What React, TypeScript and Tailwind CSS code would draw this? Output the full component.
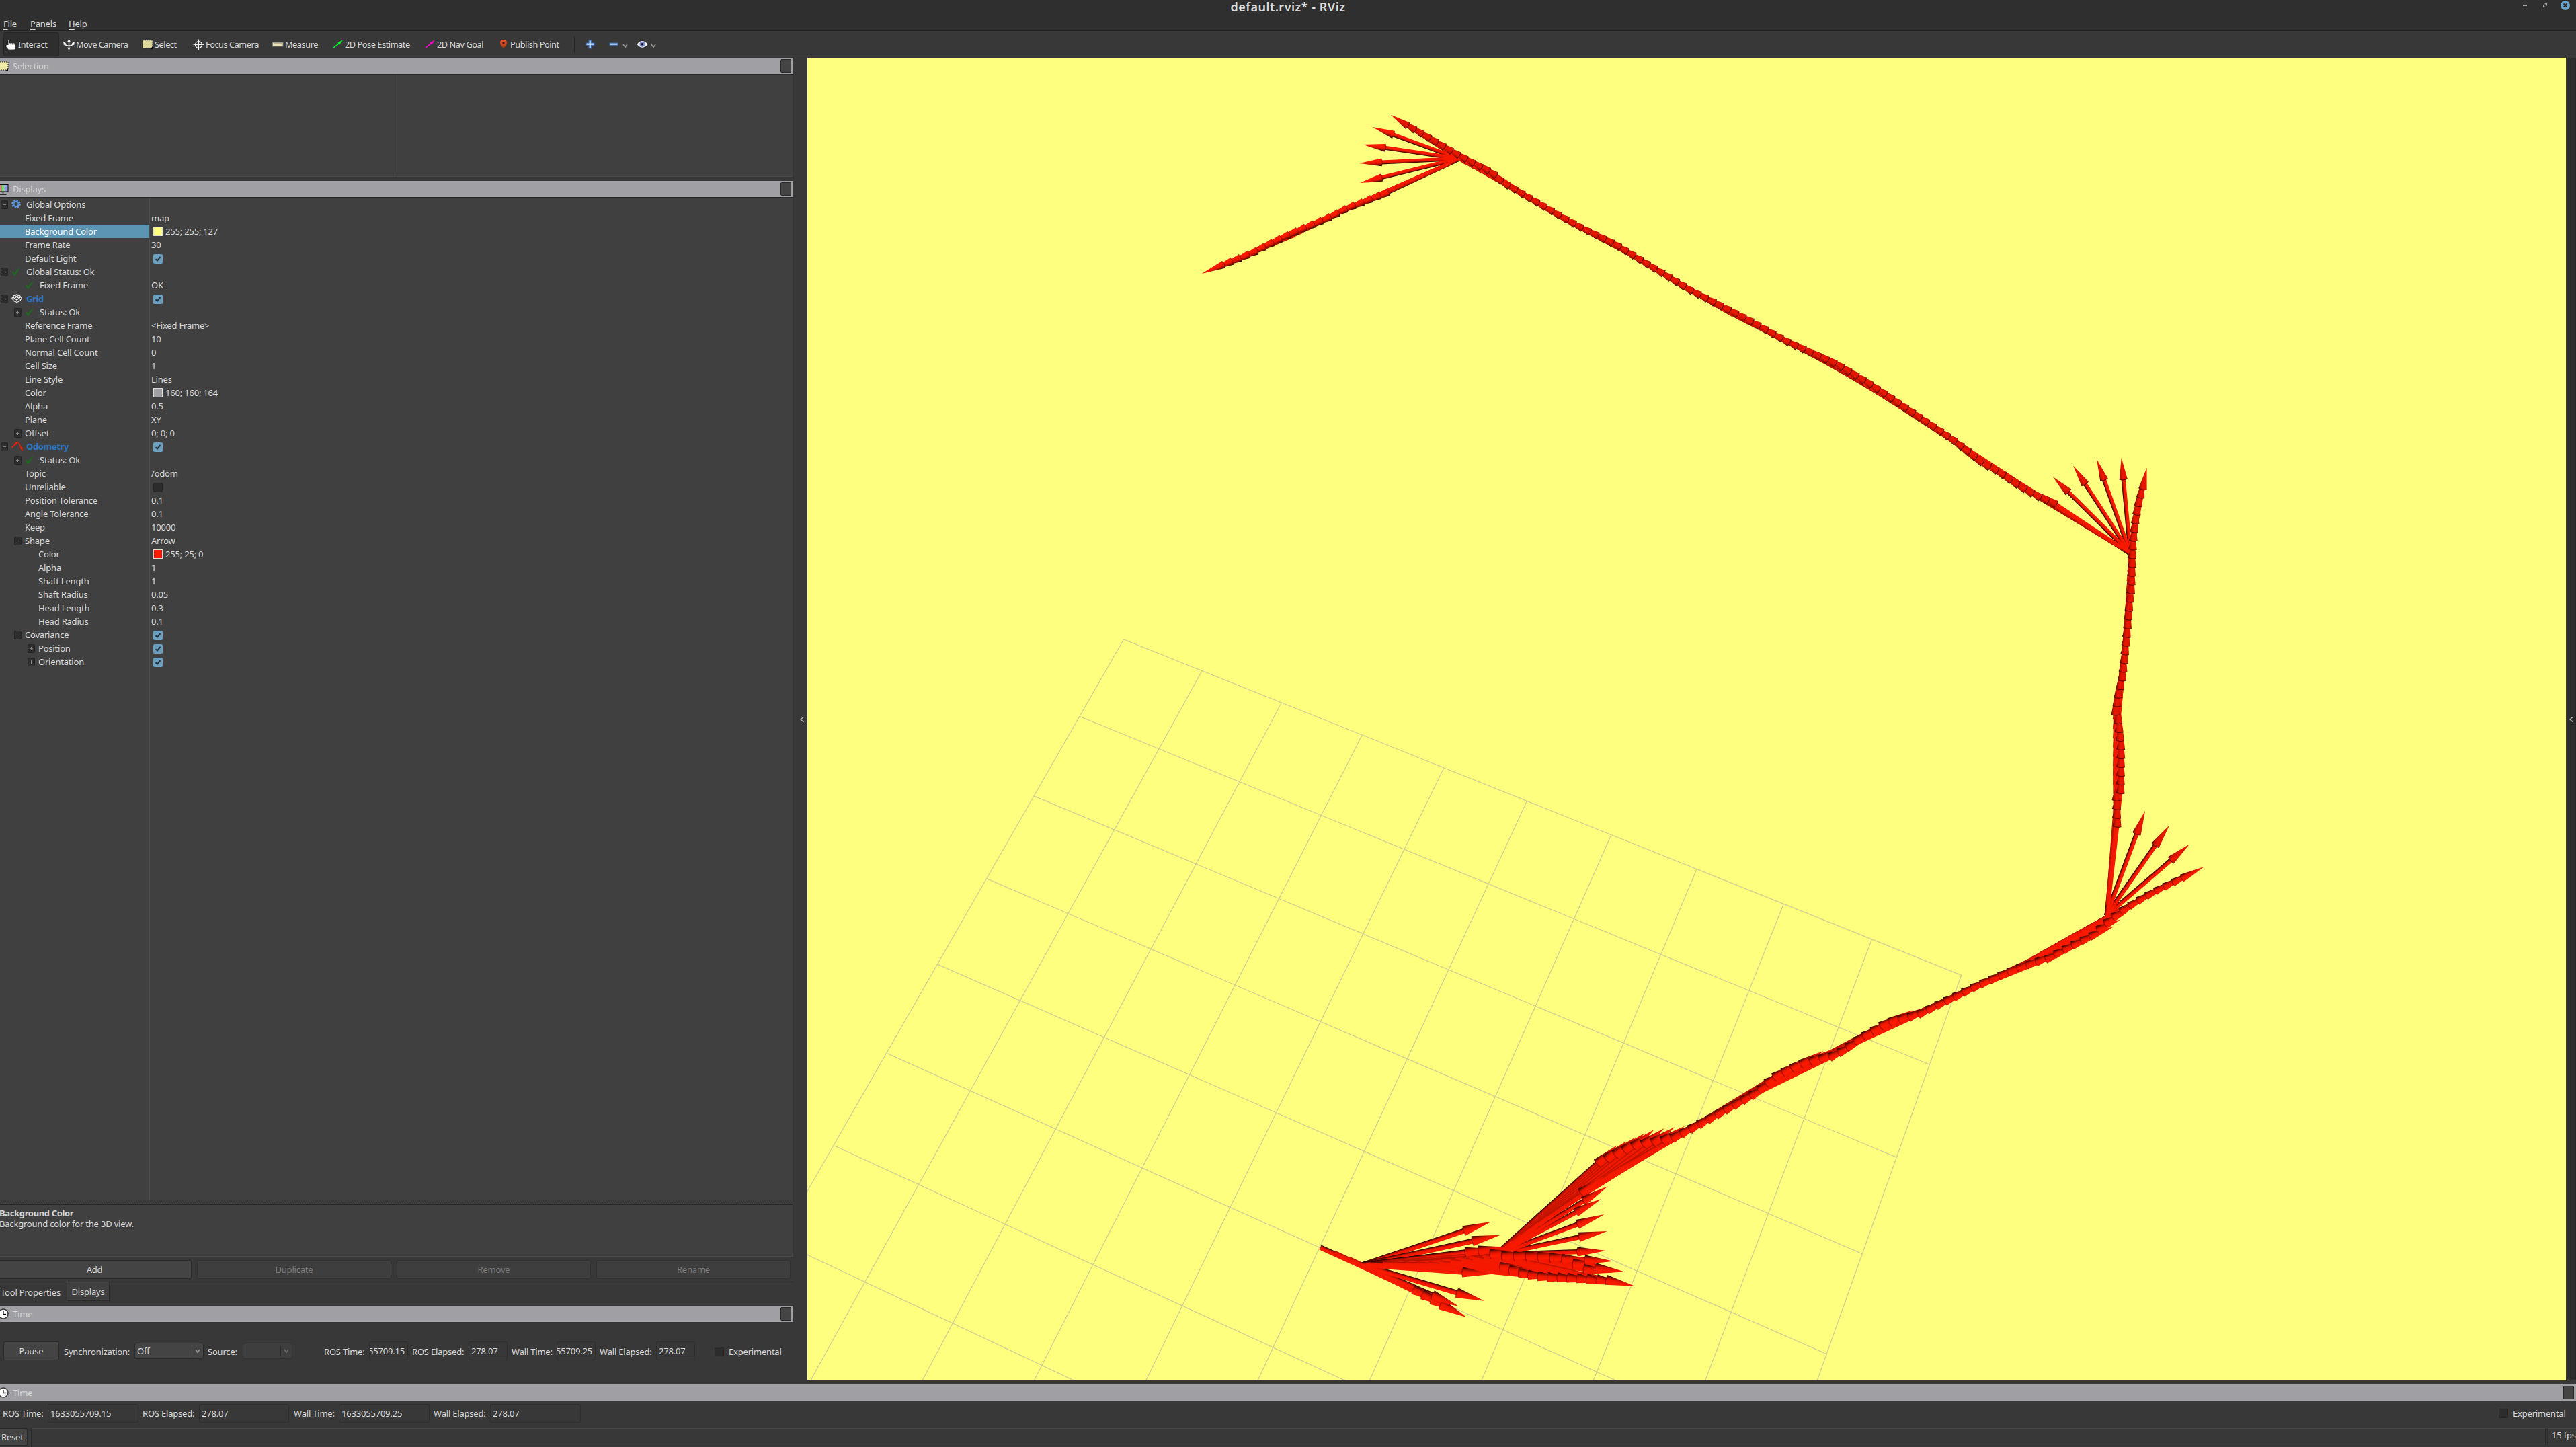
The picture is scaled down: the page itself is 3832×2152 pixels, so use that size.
import React from "react";

type Pt = [number, number];

/* ---------- 3D view: ground grid ---------- */

// Known grid nodes: [column, row, x, y]
const NODES: [number, number, number, number][] = [
  [0, 0, 1671, 950.5],
  [10, 0, 2917.3, 1450],
  [9, 0, 2784.7, 1397],
  [10, 1, 2870.4, 1583.3],
  [8, 1, 2602, 1473.3],
  [7, 1, 2470.4, 1419],
  [9, 2, 2684.2, 1663.7],
  [7, 2, 2415.3, 1551.3],
  [7, 3, 2357.6, 1688.3],
  [8, 3, 2492.4, 1746],
  [5, 4, 2029, 1712.7],
  [6, 4, 2162.5, 1771],
  [8, 4, 2435.7, 1890],
  [9, 4, 2575, 1952],
  [7, 5, 2235.3, 1977.7],
  [5, 5, 1963.8, 1853.3],
  [0, 3, 1469, 1307.5],
  [0, 6, 1239, 1703.5],
];

function solve(a: number[][], b: number[]): number[] {
  const n = b.length;
  for (let i = 0; i < n; i++) {
    let p = i;
    for (let r = i + 1; r < n; r++) if (Math.abs(a[r][i]) > Math.abs(a[p][i])) p = r;
    [a[i], a[p]] = [a[p], a[i]];
    [b[i], b[p]] = [b[p], b[i]];
    for (let r = i + 1; r < n; r++) {
      const f = a[r][i] / a[i][i];
      for (let c = i; c < n; c++) a[r][c] -= f * a[i][c];
      b[r] -= f * b[i];
    }
  }
  const x = new Array(n).fill(0);
  for (let i = n - 1; i >= 0; i--) {
    let s = b[i];
    for (let c = i + 1; c < n; c++) s -= a[i][c] * x[c];
    x[i] = s / a[i][i];
  }
  return x;
}

function fitPlane() {
  const ata = Array.from({ length: 8 }, () => new Array(8).fill(0));
  const atb = new Array(8).fill(0);
  for (const [u, v, X, Y] of NODES) {
    const x = X / 1000;
    const y = Y / 1000;
    const rows: [number[], number][] = [
      [[u, v, 1, 0, 0, 0, -u * x, -v * x], x],
      [[0, 0, 0, u, v, 1, -u * y, -v * y], y],
    ];
    for (const [r, t] of rows)
      for (let i = 0; i < 8; i++) {
        atb[i] += r[i] * t;
        for (let j = 0; j < 8; j++) ata[i][j] += r[i] * r[j];
      }
  }
  const h = solve(ata, atb);
  return (u: number, v: number): Pt => {
    const w = h[6] * u + h[7] * v + 1;
    return [((h[0] * u + h[1] * v + h[2]) / w) * 1000, ((h[3] * u + h[4] * v + h[5]) / w) * 1000];
  };
}
const project = fitPlane();

function GridLines() {
  const lines: React.ReactNode[] = [];
  for (let i = 0; i <= 10; i++) {
    const [a, b] = [project(i, 0), project(i, 10)];
    const [c, d] = [project(0, i), project(10, i)];
    lines.push(<line key={"c" + i} x1={a[0]} y1={a[1]} x2={b[0]} y2={b[1]} />);
    lines.push(<line key={"r" + i} x1={c[0]} y1={c[1]} x2={d[0]} y2={d[1]} />);
  }
  return (
    <g stroke="#cfcf92" strokeWidth="1.3">
      {lines}
    </g>
  );
}

/* ---------- 3D view: odometry arrows ---------- */

type Arrow = { tail: Pt; base: Pt; head: number; r: number; dim: boolean; shaft: "lit" | "packed" };

function sample(line: Pt[], n: number): Pt[] {
  const acc = [0];
  for (let i = 1; i < line.length; i++)
    acc.push(acc[i - 1] + Math.hypot(line[i][0] - line[i - 1][0], line[i][1] - line[i - 1][1]));
  const total = acc[acc.length - 1];
  return Array.from({ length: n }, (_, k) => {
    const s = (total * k) / (n - 1);
    let i = 1;
    while (i < line.length - 1 && acc[i] < s) i++;
    const t = (s - acc[i - 1]) / (acc[i] - acc[i - 1]);
    return [
      line[i - 1][0] + t * (line[i][0] - line[i - 1][0]),
      line[i - 1][1] + t * (line[i][1] - line[i - 1][1]),
    ] as Pt;
  });
}

function chain(tails: Pt[], bases: Pt[], n: number, head: Pt, r: Pt, dim = false): Arrow[] {
  const t = sample(tails, n);
  const b = sample(bases, n);
  return t.map((tail, i) => {
    const f = i / (n - 1);
    return {
      tail,
      base: b[i],
      head: head[0] + f * (head[1] - head[0]),
      r: r[0] + f * (r[1] - r[0]),
      dim,
      shaft: i === 0 ? "lit" : "packed",
    };
  });
}

function fan(tail: Pt, tips: Pt[], head: number, r: number, dim = false): Arrow[] {
  return tips.map(([x, y]) => {
    const d = Math.hypot(x - tail[0], y - tail[1]);
    const f = 1 - head / d;
    return { tail, base: [tail[0] + f * (x - tail[0]), tail[1] + f * (y - tail[1])], head, r, dim, shaft: "lit" };
  });
}

const ARROWS: Arrow[] = [
  ...chain([[1964, 1855], [2027, 1881]], [[2103, 1918], [2144, 1940]], 4, [42, 42], [7.5, 8]),
  ...fan([2027, 1881], [[2170, 1943], [2208, 1934.7], [2218, 1895], [2218, 1817], [2231.7, 1836.7], [2222, 1857]], 42, 7.5),
  ...chain(
    [[2027, 1881], [2120, 1878], [2225, 1866]],
    [[2200, 1860], [2226, 1868], [2290, 1869], [2328, 1873], [2358, 1888], [2374, 1886]],
    11, [44, 44], [7.5, 7.5],
  ),
  ...chain(
    [[2040, 1880], [2130, 1880], [2225, 1867]],
    [[2232, 1884], [2262, 1894], [2295, 1899], [2350, 1901], [2390, 1903.5]],
    12, [43, 43], [7, 7.5],
  ),
  ...fan([2225, 1866], [[2400, 1875.7], [2389, 1860], [2391, 1831], [2386.6, 1806], [2382, 1783], [2392, 1764], [2386, 1749]], 42, 7),
  ...chain(
    [[2225, 1866], [2390, 1750], [2480, 1699], [2620, 1618], [2716, 1572], [2765, 1546], [2850, 1508], [3010, 1433], [3132, 1365]],
    [
      [2376, 1730], [2399, 1719], [2426, 1706], [2455, 1700], [2484, 1695], [2502, 1686], [2530, 1671], [2568, 1650],
      [2610, 1627], [2634, 1605], [2649, 1597], [2678, 1583], [2706, 1576], [2724, 1572], [2742, 1562], [2762, 1547],
      [2788, 1532], [2804, 1522], [2820, 1518], [2849, 1511], [2890, 1491], [2941, 1466], [2987, 1446], [3022, 1433],
      [3043, 1427], [3073, 1411], [3109, 1393], [3135, 1370], [3158, 1353], [3183, 1338], [3207, 1325], [3246, 1306],
    ],
    67, [40, 37], [7.4, 6],
  ),
  ...fan([3133, 1362], [[3257, 1255.6], [3227, 1227.4], [3191, 1206]], 36, 6.5, true),
  ...chain(
    [[3134, 1360], [3147, 1230], [3146, 1070], [3157, 1000], [3165, 900], [3169, 823]],
    [
      [3149, 1229], [3148, 1186], [3154, 1180], [3155, 1117], [3151, 1076], [3147, 1063], [3151, 1037], [3157, 1010],
      [3160, 980], [3165, 930], [3167, 906], [3170, 879], [3172, 822], [3175, 785], [3180, 755], [3187.5, 727],
    ],
    40, [34, 32], [6.5, 6.2], true,
  ),
  ...fan([3169, 823], [[3155.7, 680.7], [3119, 683], [3084, 692.6], [3053.7, 709]], 32, 6, true),
  ...chain(
    [[3168, 823], [3058, 752], [2976, 702], [2860, 627], [2740, 549], [2575, 467], [2456, 395], [2333, 330], [2240, 275], [2171, 237]],
    [
      [3058, 750], [3030, 738], [3006, 724], [2977, 704], [2953, 691], [2908, 656], [2835, 607], [2786, 574], [2736, 544],
      [2664, 511], [2603, 477], [2517, 433], [2456, 396], [2407, 366], [2355, 340], [2333, 328], [2264, 288], [2237, 272],
      [2222, 258], [2199, 247], [2172, 232], [2134, 210], [2094, 187],
    ],
    90, [33, 30], [6.1, 5.6], true,
  ),
  ...fan([2170, 236], [[2041.5, 189], [2027.8, 215], [2022, 243], [2023, 272]], 33, 5.8),
  ...chain(
    [[2170, 237], [2008, 309], [1925, 350]],
    [[2065, 286], [2008, 308], [1985, 320], [1924, 346], [1897, 359], [1866, 375], [1820, 393.5]],
    21, [34, 35], [5.8, 5.8],
  ),
];

function Arrows() {
  const at = (a: Arrow) => {
    const deg = (Math.atan2(a.base[1] - a.tail[1], a.base[0] - a.tail[0]) * 180) / Math.PI;
    return `rotate(${deg.toFixed(2)})`;
  };
  return (
    <>
      <defs>
        <linearGradient id="lit" gradientUnits="userSpaceOnUse" x1="0" y1="-1" x2="0" y2="1">
          <stop offset="0" stopColor="#140100" />
          <stop offset="0.2" stopColor="#8a0e00" />
          <stop offset="0.4" stopColor="#e61700" />
          <stop offset="0.7" stopColor="#ff1a00" />
          <stop offset="1" stopColor="#f01800" />
        </linearGradient>
        <linearGradient id="packed" gradientUnits="userSpaceOnUse" x1="0" y1="-1" x2="0" y2="1">
          <stop offset="0" stopColor="#a81100" />
          <stop offset="0.3" stopColor="#f01800" />
          <stop offset="1" stopColor="#f81900" />
        </linearGradient>
        <linearGradient id="dim" gradientUnits="userSpaceOnUse" x1="0" y1="-1" x2="0" y2="1">
          <stop offset="0" stopColor="#3a0500" />
          <stop offset="0.18" stopColor="#b81200" />
          <stop offset="0.45" stopColor="#ea1700" />
          <stop offset="0.8" stopColor="#e01600" />
          <stop offset="1" stopColor="#b01100" />
        </linearGradient>
      </defs>
      {ARROWS.map((a, i) => {
        const len = Math.hypot(a.base[0] - a.tail[0], a.base[1] - a.tail[1]);
        return (
          <g key={i} transform={`translate(${a.tail[0].toFixed(1)} ${a.tail[1].toFixed(1)}) ${at(a)} scale(1 ${(a.r * 0.52).toFixed(2)})`}>
            <rect x="0" y="-1" width={len.toFixed(1)} height="2" fill={a.shaft === "lit" ? "url(#lit)" : "url(#packed)"} />
          </g>
        );
      })}
      {ARROWS.map((a, i) => (
        <g key={i} transform={`translate(${a.base[0].toFixed(1)} ${a.base[1].toFixed(1)}) ${at(a)} scale(1 ${a.r.toFixed(2)})`}>
          <path d={`M0 -1 L${a.head.toFixed(1)} 0 L0 1 Q-2.5 0 0 -1Z`} fill={a.dim ? "url(#dim)" : "url(#lit)"} />
          <path d="M0 -1 Q-2.5 0 0 1" fill="none" stroke="#3a0500" strokeWidth="1.1" vectorEffect="non-scaling-stroke" opacity={a.dim ? 0.8 : 0.45} />
        </g>
      ))}
    </>
  );
}

/* ---------- Small widgets ---------- */

function Check({ on }: { on: boolean }) {
  return (
    <span className={`flex h-[14px] w-[14px] shrink-0 items-center justify-center rounded-[2px] ${on ? "bg-[#6a9fc0]" : "border border-[#252525] bg-[#2c2c2c]"}`}>
      {on && (
        <svg width="10" height="10" viewBox="0 0 10 10">
          <path d="M1.5 5.2 L4 7.6 L8.5 2" fill="none" stroke="#25323a" strokeWidth="2" />
        </svg>
      )}
    </span>
  );
}

function Tick() {
  return (
    <svg width="15" height="16" viewBox="0 0 15 16">
      <path d="M1 8.5 L4.5 14.5 L13.5 1.2 C9.5 4 6.5 7.5 4.4 11 L3 8Z" fill="#167016" />
    </svg>
  );
}

function Clock() {
  return (
    <svg width="14" height="16" viewBox="0 0 14 16">
      <circle cx="5" cy="8" r="7" fill="#fff" stroke="#3a3a3a" strokeWidth="1.6" />
      <path d="M5 4 V8.5 H9" fill="none" stroke="#111" strokeWidth="1.3" />
    </svg>
  );
}

function SelectIcon({ x = 0 }: { x?: number }) {
  return (
    <svg width="17" height="15" viewBox={`${x} 0 17 15`}>
      <rect x="1" y="1" width="15" height="12" fill={x ? "#f0eaa8" : "#ddd79a"} />
      <rect x="1" y="1" width="15" height="12" fill="none" stroke="#222" strokeDasharray="1.5 1.5" />
      <path d="M16 10 V14 H12.5 Z" fill="#000" />
    </svg>
  );
}

function Monitor() {
  return (
    <svg width="14" height="17" viewBox="0 0 14 17">
      <rect x="-4" y="1" width="16.5" height="12" fill="#000" />
      <path d="M-2 2 H2.2 V11.5 H-2Z" fill="#e08080" />
      <path d="M2.2 2 H7 V11.5 H2.2Z" fill="#80d880" />
      <path d="M7 2 H11.5 V11.5 H7Z" fill="#9a98e8" />
      <path d="M4.5 13 V15 M-1 16 H9.5" stroke="#000" strokeWidth="1.4" />
    </svg>
  );
}

function DockTitle({ icon, label }: { icon: React.ReactNode; label: string }) {
  return (
    <div className="flex h-6 shrink-0 items-center bg-[#a0a0a4] pr-[3px] text-[#d6d6d6]">
      <span className="flex w-[19px] items-center">{icon}</span>
      <span className="flex-1">{label}</span>
      <span className="h-5 w-[16px] rounded-[2px] border border-[#282828] bg-[#444444]" />
    </div>
  );
}

function Field({ value, className }: { value: string; className: string }) {
  return (
    <span className={`flex h-[28px] items-center overflow-hidden rounded-[3px] border border-[#2e2e2e] bg-[#383838] ${className}`}>
      {value}
    </span>
  );
}

function Chevron({ color = "#9a9a9a" }: { color?: string }) {
  return (
    <svg width="8" height="7" viewBox="0 0 8 7">
      <path d="M1 1 L4 5.5 L7 1" fill="none" stroke={color} strokeWidth="1.5" />
    </svg>
  );
}

function SideArrow() {
  return (
    <svg width="8" height="10" viewBox="0 0 8 10">
      <path d="M6.5 1.2 L2 5 L6.5 8.8" fill="none" stroke="#b4b4b4" strokeWidth="1.5" />
    </svg>
  );
}

/* ---------- Toolbar ---------- */

const DIAG = "M1 12 L9 5.5 L8.5 4.5 L16 0.5 L11.5 7 L10.5 6.5 L2 13Z";

const TOOLS: { label: string; w: string; icon: React.ReactNode }[] = [
  {
    label: "Interact", w: "w-[85px]",
    icon: (
      <svg width="17" height="17" viewBox="0 0 17 17">
        <path d="M1 9 L3 7.5 L4 9 V1.5 H6 V6 L8 5.8 L10 6 L12 5.8 L15.5 6.5 V14 L14 16 H4.5 L1 12Z" fill="#fff" stroke="#111" strokeWidth="0.8" />
        <path d="M8 6 V8.5 M10.7 6 V8.5 M13.3 6 V8.5" stroke="#444" />
      </svg>
    ),
  },
  {
    label: "Move Camera", w: "w-[117px]",
    icon: (
      <svg width="17" height="17" viewBox="0 0 17 17" fill="none" stroke="#fff" strokeWidth="1.4">
        <path d="M8.5 2 V15 M1.5 6.5 Q3 10 8.5 10 Q14 10 15.5 6.5" />
        <path d="M8.5 0.5 L6.5 4 H10.5Z M8.5 16.5 L6.5 13 H10.5Z M0.5 4.5 L1 9 L4 6.5Z M16.5 4.5 L16 9 L13 6.5Z" fill="#fff" strokeWidth="0.4" />
      </svg>
    ),
  },
  { label: "Select", w: "w-[76px]", icon: <SelectIcon /> },
  {
    label: "Focus Camera", w: "w-[118px]",
    icon: (
      <svg width="17" height="17" viewBox="0 0 17 17" fill="none" stroke="#f4f4f4" strokeWidth="1.2">
        <circle cx="8.5" cy="8.5" r="5" />
        <path d="M8.5 0.5 V16.5 M0.5 8.5 H16.5" />
      </svg>
    ),
  },
  {
    label: "Measure", w: "w-[89px]",
    icon: (
      <svg width="17" height="8" viewBox="0 0 17 8">
        <rect x="0.5" y="1" width="15.5" height="6" fill="#e8e0b0" stroke="#777" />
        <path d="M3 1.5 V4 M5 1.5 V4 M7 1.5 V4 M9 1.5 V4 M11 1.5 V4 M13 1.5 V4" stroke="#7a7560" strokeWidth="0.9" />
      </svg>
    ),
  },
  { label: "2D Pose Estimate", w: "w-[137px]", icon: <svg width="17" height="14" viewBox="0 0 17 14"><path d={DIAG} fill="#00ff2a" /></svg> },
  { label: "2D Nav Goal", w: "w-[109px]", icon: <svg width="17" height="14" viewBox="0 0 17 14"><path d={DIAG} fill="#ff00d0" /></svg> },
  {
    label: "Publish Point", w: "w-[118px]",
    icon: (
      <svg width="17" height="17" viewBox="0 0 17 17">
        <defs>
          <linearGradient id="pin" x1="0" y1="0" x2="0" y2="1">
            <stop offset="0" stopColor="#ee5535" />
            <stop offset="0.6" stopColor="#c04418" />
            <stop offset="1" stopColor="#4a3018" />
          </linearGradient>
        </defs>
        <path d="M9 1 C12 1 14 3 14 5.8 C14 9 10.5 12 9 16 C7.5 12 4 9 4 5.8 C4 3 6 1 9 1Z" fill="url(#pin)" />
        <circle cx="9" cy="5.7" r="1.8" fill="#3a1a12" />
      </svg>
    ),
  },
];

function Toolbar() {
  return (
    <div className="flex h-[41px] shrink-0 items-center whitespace-nowrap border-b border-[#292929] bg-[#383838] pl-[5px] text-[12.75px] tracking-[-0.45px]">
      {TOOLS.map((t, i) => (
        <div key={t.label} className={`flex h-[36px] items-center ${t.w}`}>
          <div className={`flex h-full items-center gap-[2px] ${i === 0 ? "w-[83px] rounded-[3px] border border-[#272727] bg-[#2e2e2e] pl-[2px]" : "pl-[4px]"}`}>
            <span className="flex w-[17px] shrink-0 items-center justify-center">{t.icon}</span>
            <span>{t.label}</span>
          </div>
        </div>
      ))}
      <div className="h-6 w-px bg-[#262626]" />
      <div className="flex items-center pl-[16px]">
        <svg width="14" height="14" viewBox="0 0 14 14">
          <path d="M5 1 H8.5 V5 H13 V8.5 H8.5 V13 H5 V8.5 H1 V5 H5Z" fill="#b8d4f4" stroke="#2f66b0" strokeWidth="1.2" />
        </svg>
        <svg className="ml-[21px]" width="14" height="6" viewBox="0 0 14 6">
          <rect x="1" y="1" width="12" height="3.5" fill="#b8d4f4" stroke="#2f66b0" strokeWidth="1.2" />
        </svg>
        <span className="ml-[6px] mt-1 flex"><Chevron /></span>
        <svg className="ml-[13px]" width="17" height="12" viewBox="0 0 17 12">
          <path d="M0.5 6 Q8.5 -4 16.5 6 Q8.5 15.5 0.5 6Z" fill="#ececf2" />
          <circle cx="8.5" cy="5.8" r="4" fill="#8090d0" />
          <circle cx="8.5" cy="5.8" r="1.8" fill="#101020" />
        </svg>
        <span className="ml-[4px] mt-1 flex"><Chevron /></span>
      </div>
    </div>
  );
}

/* ---------- Displays tree ---------- */

type Row = {
  name: string;
  level: number;
  toggle?: "+" | "-";
  icon?: "gear" | "tick" | "grid" | "odom";
  value?: string;
  check?: boolean;
  swatch?: string;
  selected?: boolean;
};

const ROWS: Row[] = [
  { name: "Global Options", level: 0, toggle: "-", icon: "gear" },
  { name: "Fixed Frame", level: 1, value: "map" },
  { name: "Background Color", level: 1, value: "255; 255; 127", swatch: "bg-[#ffff7f]", selected: true },
  { name: "Frame Rate", level: 1, value: "30" },
  { name: "Default Light", level: 1, check: true },
  { name: "Global Status: Ok", level: 0, toggle: "-", icon: "tick" },
  { name: "Fixed Frame", level: 1, icon: "tick", value: "OK" },
  { name: "Grid", level: 0, toggle: "-", icon: "grid", check: true },
  { name: "Status: Ok", level: 1, toggle: "+", icon: "tick" },
  { name: "Reference Frame", level: 1, value: "<Fixed Frame>" },
  { name: "Plane Cell Count", level: 1, value: "10" },
  { name: "Normal Cell Count", level: 1, value: "0" },
  { name: "Cell Size", level: 1, value: "1" },
  { name: "Line Style", level: 1, value: "Lines" },
  { name: "Color", level: 1, value: "160; 160; 164", swatch: "bg-[#a0a0a4]" },
  { name: "Alpha", level: 1, value: "0.5" },
  { name: "Plane", level: 1, value: "XY" },
  { name: "Offset", level: 1, toggle: "+", value: "0; 0; 0" },
  { name: "Odometry", level: 0, toggle: "-", icon: "odom", check: true },
  { name: "Status: Ok", level: 1, toggle: "+", icon: "tick" },
  { name: "Topic", level: 1, value: "/odom" },
  { name: "Unreliable", level: 1, check: false },
  { name: "Position Tolerance", level: 1, value: "0.1" },
  { name: "Angle Tolerance", level: 1, value: "0.1" },
  { name: "Keep", level: 1, value: "10000" },
  { name: "Shape", level: 1, toggle: "-", value: "Arrow" },
  { name: "Color", level: 2, value: "255; 25; 0", swatch: "bg-[#ff1900]" },
  { name: "Alpha", level: 2, value: "1" },
  { name: "Shaft Length", level: 2, value: "1" },
  { name: "Shaft Radius", level: 2, value: "0.05" },
  { name: "Head Length", level: 2, value: "0.3" },
  { name: "Head Radius", level: 2, value: "0.1" },
  { name: "Covariance", level: 1, toggle: "-", check: true },
  { name: "Position", level: 2, toggle: "+", check: true },
  { name: "Orientation", level: 2, toggle: "+", check: true },
];

const INDENT = ["w-[1px]", "w-[21px]", "w-[41px]"];

function RowIcon({ kind }: { kind: NonNullable<Row["icon"]> }) {
  if (kind === "tick") return <Tick />;
  if (kind === "gear")
    return (
      <svg width="14" height="16" viewBox="0 0 14 16">
        <circle cx="7" cy="7.5" r="5.4" fill="none" stroke="#6d9fe0" strokeWidth="2.6" strokeDasharray="2.12 2.12" />
        <circle cx="7" cy="7.5" r="3.7" fill="none" stroke="#5b8fd8" strokeWidth="2.4" />
      </svg>
    );
  if (kind === "grid")
    return (
      <svg width="16" height="14" viewBox="0 0 16 14" fill="none" stroke="#f4f4f4" strokeWidth="1.1">
        <path d="M8 0.8 L12.5 2.7 L15.2 6.5 L12.5 10.5 L8 12.5 L3.5 10.5 L0.8 6.5 L3.5 2.7Z M5.2 2 L13.8 8.5 M2.2 4.6 L10.8 11.3 M10.8 2 L2.2 8.5 M13.8 4.6 L5.2 11.3" />
      </svg>
    );
  return (
    <svg width="17" height="16" viewBox="0 0 17 16" fill="none" stroke="#f41c00" strokeWidth="1.6">
      <path d="M0.5 10 L9 1.5 M10.5 2 L16 14" />
      <path d="M4.5 3.5 L9.5 1 L7 5.5Z M13 9.5 L16.3 14.5 L16 9Z" fill="#f41c00" strokeWidth="0.5" />
    </svg>
  );
}

function TreeRow({ row }: { row: Row }) {
  const title = row.icon === "grid" || row.icon === "odom";
  return (
    <div className="flex h-5 shrink-0 items-center">
      <div className={`flex h-5 w-[222px] shrink-0 items-center whitespace-nowrap ${row.selected ? "bg-[#5c94b4] text-white" : ""}`}>
        <span className={`shrink-0 ${INDENT[row.level]}`} />
        <span className="flex w-[16px] shrink-0">
          {row.toggle && (
            <svg width="11" height="13" viewBox="0 0 11 13">
              <rect x="0.5" y="0.5" width="10" height="12" rx="1.5" fill="#2e2e2e" stroke="#242424" />
              <path d={row.toggle === "+" ? "M3 6.5 H8 M5.5 4 V9" : "M3 6.5 H8"} stroke="#808080" />
            </svg>
          )}
        </span>
        {row.icon && (
          <span className="flex w-[22px] shrink-0">
            <RowIcon kind={row.icon} />
          </span>
        )}
        <span className={title ? "font-bold tracking-[-0.35px] text-[#2a76c6]" : ""}>{row.name}</span>
      </div>
      <div className="flex h-5 items-center pl-[3px]">
        {row.check !== undefined && (
          <span className="ml-[3px] mt-px">
            <Check on={row.check} />
          </span>
        )}
        {row.swatch && <span className={`ml-[3px] mr-[4px] h-[14px] w-[14px] border border-[#dcdcdc] ${row.swatch}`} />}
        {row.value}
      </div>
    </div>
  );
}

/* ---------- Side panels ---------- */

function SidePanels() {
  return (
    <div className="flex w-[1180px] shrink-0 flex-col overflow-hidden">
      <DockTitle icon={<SelectIcon x={4} />} label="Selection" />
      <div className="flex h-[153px] shrink-0 border-y border-r border-t-[#292929] border-r-[#4a4a4a] border-b-[#4a4a4a] bg-[#404040]">
        <div className="w-[588px] border-r border-[#4c4c4c]" />
      </div>
      <div className="h-[6px] shrink-0" />
      <DockTitle icon={<Monitor />} label="Displays" />
      <div className="flex h-[1492px] shrink-0 flex-col border-y border-r border-t-[#292929] border-r-[#4a4a4a] border-b-[#4a4a4a] bg-[linear-gradient(90deg,#404040_222px,#505050_222px,#505050_223px,#404040_223px)]">
        {ROWS.map((r, i) => (
          <TreeRow key={i} row={r} />
        ))}
      </div>
      <div className="h-[6px] shrink-0 bg-[repeating-linear-gradient(60deg,#383838_0px,#383838_2px,#444444_2px,#444444_3px)]" />
      <div className="flex h-[78px] shrink-0 flex-col border-y border-r border-t-[#272727] border-r-[#4a4a4a] border-b-[#4a4a4a] bg-[#404040] pt-[4px] leading-4">
        <div className="-ml-px font-bold tracking-[-0.35px]">Background Color</div>
        <div className="-ml-px">Background color for the 3D view.</div>
      </div>
      <div className="flex h-[38px] shrink-0 items-center gap-[8px] border-b border-[#2b2b2b] pr-[3px] pt-px">
        <div className="-ml-[4px] flex h-[28px] w-[289px] items-center justify-center rounded-[3px] border border-[#2a2a2a] bg-[#444444]">Add</div>
        {["Duplicate", "Remove", "Rename"].map((b) => (
          <div key={b} className="flex h-[28px] w-[289px] items-center justify-center rounded-[3px] border border-[#303030] bg-[#3e3e3e] text-[#7c7c7c]">
            {b}
          </div>
        ))}
      </div>
      <div className="flex h-[35px] shrink-0">
        <div className="flex h-[29px] w-[99px] items-center pl-px">Tool Properties</div>
        <div className="flex h-[28px] w-[64px] items-center justify-center border border-t-0 border-[#2a2a2a] bg-[#404040] pt-px">Displays</div>
      </div>
      <DockTitle icon={<Clock />} label="Time" />
      <div className="flex h-[86px] shrink-0 items-center whitespace-nowrap">
        <div className="ml-[5px] flex h-[28px] w-[83px] items-center justify-center rounded-[3px] border border-[#2a2a2a] bg-[#444444]">Pause</div>
        <div className="ml-[7px] w-[105px] pt-[2px]">Synchronization:</div>
        <div className="flex h-[24px] w-[103px] items-center rounded-[3px] border border-[#2a2a2a] bg-[#444444] pl-[3px]">
          <span className="flex-1">Off</span>
          <span className="flex h-[15px] w-[17px] items-center justify-center border-l border-[#2a2a2a]"><Chevron /></span>
        </div>
        <div className="ml-[6px] w-[52px] pt-[2px]">Source:</div>
        <div className="flex h-[24px] w-[74px] items-center justify-end rounded-[3px] border border-[#303030] bg-[#3e3e3e]">
          <span className="flex h-[15px] w-[17px] items-center justify-center border-l border-[#2a2a2a]"><Chevron color="#6c6c6c" /></span>
        </div>
        <div className="ml-[47px] w-[67px] pt-[2px]">ROS Time:</div>
        <Field className="w-[58px] justify-end pr-[4px]" value="55709.15" />
        <div className="ml-[6px] w-[84px] pt-[2px]">ROS Elapsed:</div>
        <Field className="w-[58px] pl-[3px]" value="278.07" />
        <div className="ml-[6px] w-[67px] pt-[2px]">Wall Time:</div>
        <Field className="w-[58px] justify-end pr-[4px]" value="55709.25" />
        <div className="ml-[6px] w-[84px] pt-[2px]">Wall Elapsed:</div>
        <Field className="w-[58px] pl-[3px]" value="278.07" />
        <span className="ml-[29px] pt-px"><Check on={false} /></span>
        <span className="ml-[7px] pt-[2px]">Experimental</span>
      </div>
    </div>
  );
}

/* ---------- Page ---------- */

export default function App() {
  return (
    <div className="flex h-[2152px] w-[3832px] flex-col overflow-hidden bg-[#383838] font-['Noto_Sans','Open_Sans',sans-serif] text-[13px] leading-5 tracking-[-0.2px] text-[#d8d8d8]">
      <div className="flex h-[46px] shrink-0 flex-col border-b border-[#252525] bg-[#2f2f2f]">
        <div className="flex h-[25px] items-start">
          <div className="w-[400px]" />
          <div className="flex-1 text-center text-[18px] font-semibold leading-[21px] tracking-[0.5px] text-[#dcdcdc]">default.rviz* - RViz</div>
          <div className="flex h-4 w-[400px] items-center justify-end pr-[9px]">
            <span className="h-[2px] w-[6px] bg-[#a0a0a0]" />
            <svg className="ml-[24px]" width="6" height="6" viewBox="0 0 6 6">
              <path d="M2 0 H6 V4Z M0 2 L4 6 H0Z" fill="#a0a0a0" />
            </svg>
            <svg className="ml-[20px]" width="14" height="14" viewBox="0 0 14 14">
              <circle cx="7" cy="7" r="7" fill="#6ba3c4" />
              <path d="M4.5 4.5 L9.5 9.5 M9.5 4.5 L4.5 9.5" stroke="#2f2f2f" strokeWidth="2" />
            </svg>
          </div>
        </div>
        <div className="flex pl-[5px]">
          {[
            ["F", "ile", "w-[40px]"],
            ["P", "anels", "w-[57px]"],
            ["H", "elp", "w-[40px]"],
          ].map(([a, b, w]) => (
            <div key={a} className={w}>
              <span className="underline underline-offset-3">{a}</span>
              {b}
            </div>
          ))}
        </div>
      </div>
      <Toolbar />
      <div className="-mt-px flex h-[1967px] shrink-0">
        <SidePanels />
        <div className="flex w-[21px] items-center justify-center pl-[4px]">
          <SideArrow />
        </div>
        <div className="w-[2616px] bg-[#ffff7f]">
          <svg width="2616" height="1967" viewBox="1201 86 2616 1967" className="block">
            <GridLines />
            <Arrows />
          </svg>
        </div>
        <div className="ml-px flex flex-1 items-center justify-center border border-[#262626] bg-[#2d2d2d]">
          <SideArrow />
        </div>
      </div>
      <div className="h-[6px] shrink-0" />
      <DockTitle icon={<Clock />} label="Time" />
      <div className="flex h-[40px] shrink-0 items-center whitespace-nowrap pb-[2px] pl-[4px]">
        <div className="w-[67px]">ROS Time:</div>
        <Field className="w-[135px] pl-[3px]" value="1633055709.15" />
        <div className="ml-[6px] w-[84px]">ROS Elapsed:</div>
        <Field className="w-[134px] pl-[3px]" value="278.07" />
        <div className="ml-[7px] w-[67px]">Wall Time:</div>
        <Field className="w-[135px] pl-[3px]" value="1633055709.25" />
        <div className="ml-[6px] w-[84px]">Wall Elapsed:</div>
        <Field className="w-[135px] pl-[3px]" value="278.07" />
        <div className="flex-1" />
        <Check on={false} />
        <div className="ml-[7px] w-[94px]">Experimental</div>
      </div>
      <div className="flex h-[29px] shrink-0 whitespace-nowrap">
        <div className="mt-px flex h-[26px] w-[41px] items-center rounded-r-[3px] border border-l-0 border-[#2a2a2a] bg-[#444444] pl-[2px]">Reset</div>
        <div className="ml-[5px] h-[28px] w-[3741px] border border-[#2c2c2c] shadow-[inset_1px_1px_0_#484848]" />
        <div className="ml-[2px] h-[28px] flex-1 border border-r-0 border-[#2c2c2c] pl-[6px] leading-[20px] shadow-[inset_1px_1px_0_#484848]">15 fps</div>
      </div>
    </div>
  );
}
